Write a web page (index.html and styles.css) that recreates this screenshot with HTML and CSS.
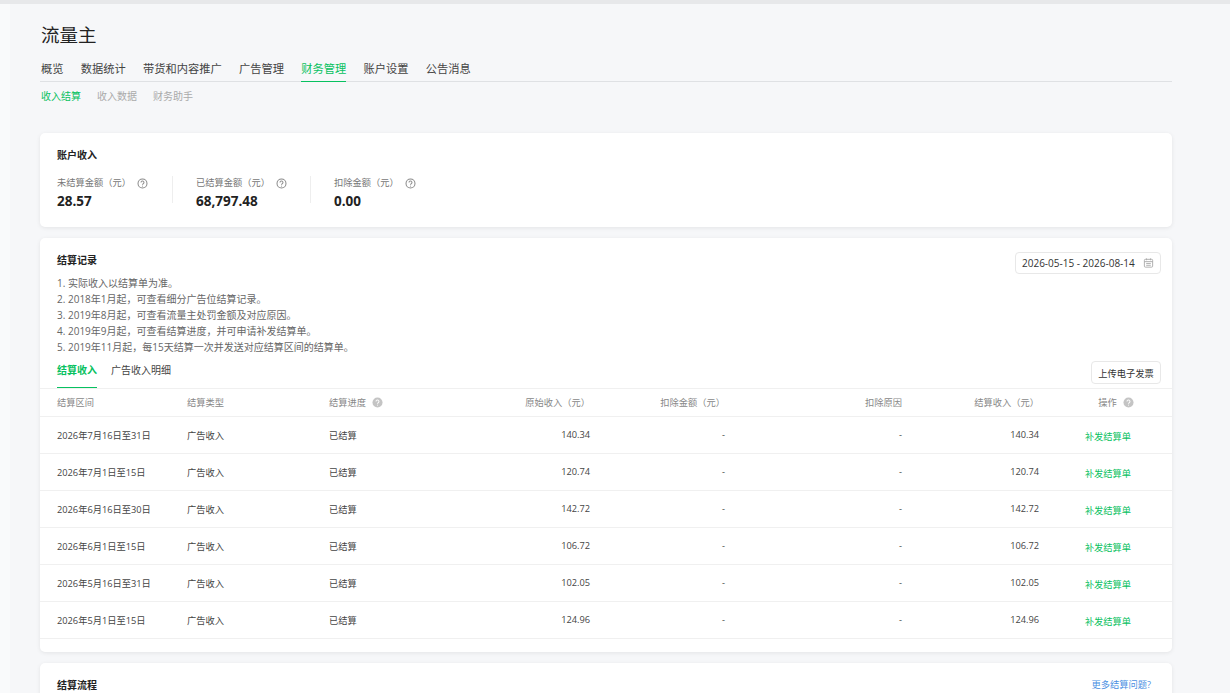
FILE: index.html
```html
<!DOCTYPE html>
<html lang="zh-CN">
<head>
    <meta charset="UTF-8">
    <title>流量主</title>
    <link rel="stylesheet" href="styles.css">
</head>
<body>
    <div class="top-strip"></div>
    <main class="page">
        <h1 class="page-title">流量主</h1>
        <nav class="main-nav">
            <a href="#">概览</a>
            <a href="#">数据统计</a>
            <a href="#">带货和内容推广</a>
            <a href="#">广告管理</a>
            <a href="#" class="active">财务管理</a>
            <a href="#">账户设置</a>
            <a href="#">公告消息</a>
        </nav>
        <nav class="sub-nav">
            <a href="#" class="active">收入结算</a>
            <a href="#">收入数据</a>
            <a href="#">财务助手</a>
        </nav>

        <section class="card income-card">
            <h2 class="card-title">账户收入</h2>
            <div class="stats">
                <div class="stat">
                    <div class="stat-label">未结算金额（元）<svg class="help" viewBox="0 0 12 12"><circle cx="6" cy="6" r="4.9"/><path d="M4.4 4.8a1.6 1.6 0 1 1 2.5 1.3c-.6.4-.9.7-.9 1.3"/><path d="M6 8.4v.9"/></svg></div>
                    <div class="stat-value">28.57</div>
                </div>
                <div class="stat">
                    <div class="stat-label">已结算金额（元）<svg class="help" viewBox="0 0 12 12"><circle cx="6" cy="6" r="4.9"/><path d="M4.4 4.8a1.6 1.6 0 1 1 2.5 1.3c-.6.4-.9.7-.9 1.3"/><path d="M6 8.4v.9"/></svg></div>
                    <div class="stat-value">68,797.48</div>
                </div>
                <div class="stat">
                    <div class="stat-label">扣除金额（元）<svg class="help" viewBox="0 0 12 12"><circle cx="6" cy="6" r="4.9"/><path d="M4.4 4.8a1.6 1.6 0 1 1 2.5 1.3c-.6.4-.9.7-.9 1.3"/><path d="M6 8.4v.9"/></svg></div>
                    <div class="stat-value">0.00</div>
                </div>
            </div>
        </section>

        <section class="card records-card">
            <div class="records-head">
                <div>
                    <h2 class="card-title">结算记录</h2>
                    <ol class="notes">
                        <li>1. 实际收入以结算单为准。</li>
                        <li>2. 2018年1月起，可查看细分广告位结算记录。</li>
                        <li>3. 2019年8月起，可查看流量主处罚金额及对应原因。</li>
                        <li>4. 2019年9月起，可查看结算进度，并可申请补发结算单。</li>
                        <li>5. 2019年11月起，每15天结算一次并发送对应结算区间的结算单。</li>
                    </ol>
                </div>
                <div class="date-range">2026-05-15 - 2026-08-14
                    <svg class="calendar" viewBox="0 0 12 12"><rect x="1.5" y="2" width="9" height="8.5" rx="1"/><path d="M1.5 4.5h9M3.8 1v2M8.2 1v2M3.5 6.5h5M3.5 8.5h5"/></svg>
                </div>
            </div>
            <div class="tabs">
                <a href="#" class="tab active">结算收入</a>
                <a href="#" class="tab">广告收入明细</a>
                <button class="upload-btn">上传电子发票</button>
            </div>
            <table class="records">
                <colgroup>
                    <col class="c1"><col class="c2"><col class="c3"><col class="c4">
                    <col class="c5"><col class="c6"><col class="c7"><col class="c8">
                </colgroup>
                <thead>
                    <tr>
                        <th>结算区间</th>
                        <th>结算类型</th>
                        <th>结算进度<svg class="help solid" viewBox="0 0 12 12"><circle cx="6" cy="6" r="5.5"/><path d="M4.4 4.8a1.6 1.6 0 1 1 2.5 1.3c-.6.4-.9.7-.9 1.3"/><path d="M6 8.4v.9"/></svg></th>
                        <th class="num">原始收入（元）</th>
                        <th class="num">扣除金额（元）</th>
                        <th class="num">扣除原因</th>
                        <th class="num">结算收入（元）</th>
                        <th class="op">操作<svg class="help solid" viewBox="0 0 12 12"><circle cx="6" cy="6" r="5.5"/><path d="M4.4 4.8a1.6 1.6 0 1 1 2.5 1.3c-.6.4-.9.7-.9 1.3"/><path d="M6 8.4v.9"/></svg></th>
                    </tr>
                </thead>
                <tbody>
                    <tr><td>2026年7月16日至31日</td><td>广告收入</td><td>已结算</td><td class="num">140.34</td><td class="num">-</td><td class="num">-</td><td class="num">140.34</td><td class="op"><a href="#">补发结算单</a></td></tr>
                    <tr><td>2026年7月1日至15日</td><td>广告收入</td><td>已结算</td><td class="num">120.74</td><td class="num">-</td><td class="num">-</td><td class="num">120.74</td><td class="op"><a href="#">补发结算单</a></td></tr>
                    <tr><td>2026年6月16日至30日</td><td>广告收入</td><td>已结算</td><td class="num">142.72</td><td class="num">-</td><td class="num">-</td><td class="num">142.72</td><td class="op"><a href="#">补发结算单</a></td></tr>
                    <tr><td>2026年6月1日至15日</td><td>广告收入</td><td>已结算</td><td class="num">106.72</td><td class="num">-</td><td class="num">-</td><td class="num">106.72</td><td class="op"><a href="#">补发结算单</a></td></tr>
                    <tr><td>2026年5月16日至31日</td><td>广告收入</td><td>已结算</td><td class="num">102.05</td><td class="num">-</td><td class="num">-</td><td class="num">102.05</td><td class="op"><a href="#">补发结算单</a></td></tr>
                    <tr><td>2026年5月1日至15日</td><td>广告收入</td><td>已结算</td><td class="num">124.96</td><td class="num">-</td><td class="num">-</td><td class="num">124.96</td><td class="op"><a href="#">补发结算单</a></td></tr>
                </tbody>
            </table>
        </section>

        <section class="card flow-card">
            <h2 class="card-title">结算流程</h2>
            <a href="#" class="more-link">更多结算问题?</a>
        </section>
    </main>
</body>
</html>
```

FILE: styles.css
```css
* {
    margin: 0;
    padding: 0;
    box-sizing: border-box;
}

html, body {
    height: 693px;
    overflow: hidden;
}

body {
    background: linear-gradient(to right, #f9fafb 10px, #f6f7f9 10px);
    color: #333;
    font-family: "Open Sans", "Noto Sans CJK SC", sans-serif;
    font-size: 10px;
}

a {
    text-decoration: none;
    color: inherit;
}

.top-strip {
    height: 4px;
    background-color: #e7e8ea;
}

.page {
    padding: 0 58px 0 40px;
}

.page-title {
    font-size: 18.5px;
    font-weight: 400;
    line-height: 26px;
    margin-top: 18px;
    padding-left: 1px;
    color: #222;
}

.main-nav {
    display: flex;
    gap: 17.25px;
    margin-top: 11px;
    height: 23px;
    padding-left: 1px;
    border-bottom: 1px solid #dfe1e4;
    font-size: 11.25px;
    color: #444;
}

.main-nav a {
    height: 23px;
    line-height: 20px;
}

.main-nav a.active {
    color: #07c160;
    border-bottom: 1px solid #07c160;
}

.sub-nav {
    display: flex;
    gap: 16px;
    margin-top: 7px;
    padding-left: 1px;
    line-height: 14px;
    color: #aaa;
}

.sub-nav a.active {
    color: #07c160;
}

.card {
    background-color: #fff;
    border-radius: 5px;
    box-shadow: 0 1px 4px rgba(0, 0, 0, 0.08);
}

.card-title {
    font-size: 10px;
    font-weight: 700;
    line-height: 14px;
    color: #222;
}

.income-card {
    height: 94px;
    margin-top: 30px;
    padding: 15px 17px;
}

.stats {
    display: flex;
    margin-top: 14px;
}

.stat {
    width: 138px;
    height: 27px;
    border-right: 1px solid #eee;
}

.stat:first-child {
    width: 116px;
}

.stat + .stat {
    padding-left: 23px;
}

.stat:last-child {
    border-right: none;
}

.stat-label {
    display: flex;
    align-items: center;
    font-size: 9.25px;
    line-height: 14px;
    color: #777;
}

.stat-value {
    font-size: 13.5px;
    font-weight: 700;
    line-height: 20px;
    margin-top: 1px;
    color: #222;
}

.help {
    width: 11px;
    height: 11px;
    margin-left: 6px;
    fill: none;
    stroke: #888;
    stroke-width: 1.1;
}

.help.solid {
    fill: #c4c4c4;
    stroke: none;
    vertical-align: -2px;
}

.help.solid path {
    fill: none;
    stroke: #fff;
}

.records-card {
    height: 414px;
    margin-top: 11px;
}

.records-head {
    display: flex;
    justify-content: space-between;
    padding: 15px 11px 0 17px;
}

.notes {
    list-style: none;
    margin-top: 8px;
    line-height: 16px;
    color: #666;
    font-size: 10px;
}

.date-range {
    display: flex;
    align-items: center;
    justify-content: space-between;
    width: 146px;
    height: 22px;
    margin-top: -1px;
    padding: 0 6px;
    border: 1px solid #e8e8e8;
    border-radius: 4px;
    color: #333;
}

.calendar {
    width: 11px;
    height: 12px;
    fill: none;
    stroke: #aaa;
    stroke-width: 1;
}

.tabs {
    display: flex;
    align-items: flex-start;
    height: 32px;
    padding: 0 11px 0 17px;
    border-bottom: 1px solid #f0f0f0;
    margin-top: 2px;
    color: #444;
}

.tab {
    height: 31px;
    line-height: 26px;
    margin-right: 14px;
}

.tab.active {
    color: #07c160;
    font-weight: 700;
    border-bottom: 1px solid #07c160;
}

.upload-btn {
    margin-left: auto;
    width: 70px;
    height: 23px;
    margin-top: 4px;
    background-color: #fff;
    border: 1px solid #e8e8e8;
    border-radius: 4px;
    color: #333;
    font-family: inherit;
    font-size: 9.25px;
}

.records {
    width: 100%;
    border-collapse: collapse;
    table-layout: fixed;
    font-size: 9.25px;
}

.c1 { width: 147px; }
.c2 { width: 142px; }
.c3 { width: 141px; }
.c4 { width: 125px; }
.c5 { width: 135px; }
.c6 { width: 177px; }
.c7 { width: 137px; }

.records th {
    height: 27px;
    font-weight: 400;
    text-align: left;
    color: #888;
    border-bottom: 1px solid #f0f0f0;
}

.records td {
    height: 37px;
    color: #444;
    border-bottom: 1px solid #f0f0f0;
}

.records th:first-child,
.records td:first-child {
    padding-left: 17px;
}

.records .num {
    text-align: right;
    padding-right: 5px;
}

.records .op {
    text-align: center;
    color: #07c160;
}

.records td.op {
    padding-top: 2px;
}

.records th.op {
    color: #888;
    padding-left: 16px;
}

.flow-card {
    display: flex;
    justify-content: space-between;
    height: 60px;
    margin-top: 11px;
    padding: 15px 21px 0 17px;
}

.more-link {
    color: #4a90e2;
    font-size: 9.25px;
    line-height: 14px;
}
```
